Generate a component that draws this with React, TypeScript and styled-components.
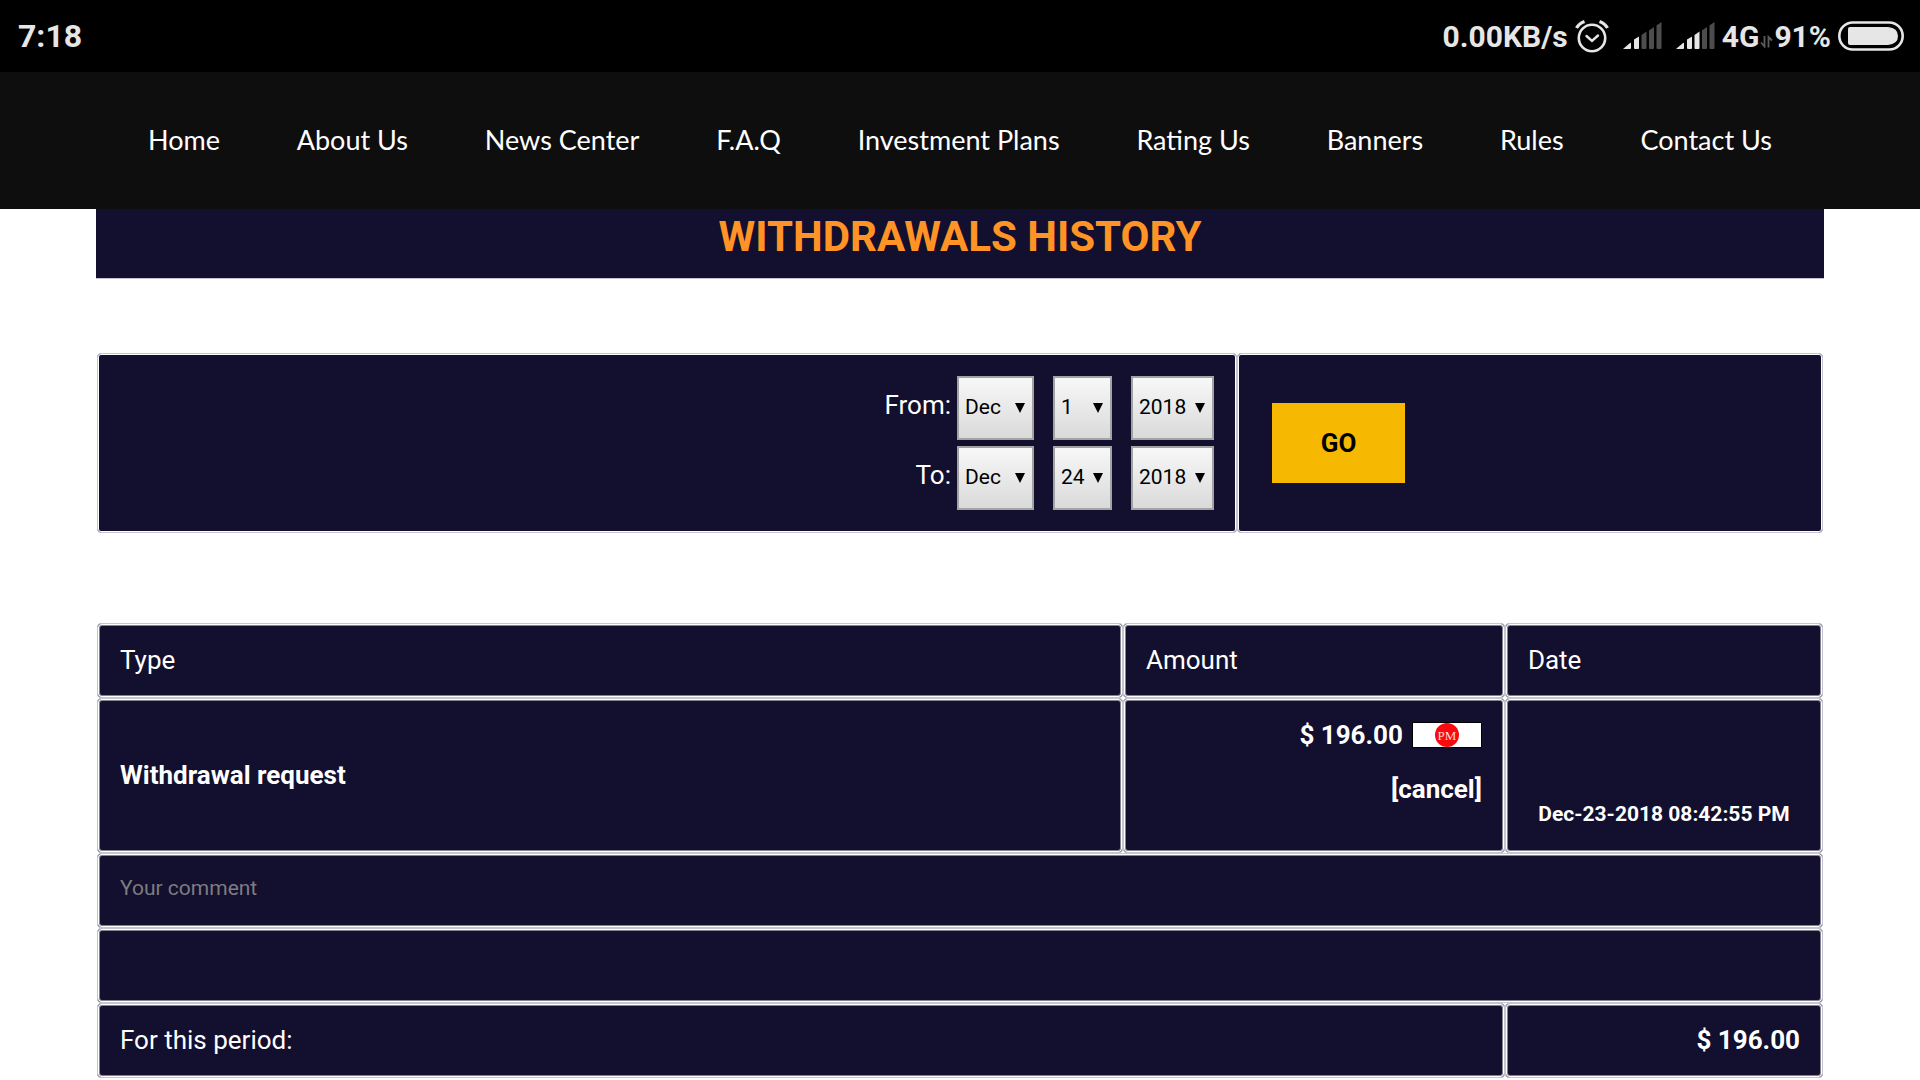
import React from "react";
import styled, { createGlobalStyle, css } from "styled-components";

const ink = "#130f2e";
const rule = "#c6c4d0";

const GlobalStyle = createGlobalStyle`
  *, *::before, *::after { box-sizing: border-box; }
  body {
    margin: 0;
    background: #fff;
    color: #fff;
    font-family: Roboto, "Liberation Sans", sans-serif;
    font-size: 26px;
  }
`;

const StatusBar = styled.header`
  display: flex;
  align-items: center;
  justify-content: space-between;
  height: 72px;
  padding: 0 16px 0 18px;
  background: #000;
  color: #e6e6e6;
  font-weight: 700;
`;

const Clock = styled.time`
  font-size: 32px;
`;

const StatusGroup = styled.div`
  display: flex;
  align-items: center;
  gap: 7px;
  font-size: 30px;

  svg { display: block; }
`;

const Network = styled.span`
  display: flex;
  align-items: center;
  gap: 1px;
`;

const Signals = styled.span`
  display: flex;
  gap: 14px;
  padding-left: 7px;
`;

const Nav = styled.nav`
  display: flex;
  align-items: center;
  justify-content: space-between;
  height: 137px;
  padding: 0 148px 2px;
  background: #0e0e0e;
  font-family: Lato, "Open Sans", sans-serif;
`;

const NavLink = styled.a`
  color: #fff;
  font-size: 27px;
  text-decoration: none;
  white-space: nowrap;
`;

const Main = styled.main`
  width: 90%;
  margin: 0 auto;
`;

const Title = styled.h1`
  margin: 0;
  padding-bottom: 14px;
  border-bottom: 1px solid ${rule};
  background: ${ink};
  color: #ff9326;
  font-size: 42px;
  font-weight: 700;
  line-height: 55px;
  text-align: center;
`;

const Filter = styled.form`
  display: grid;
  grid-template-columns: 1140fr 586fr;
  margin: 74px 1px 90px;
`;

const FilterPanel = styled.div<{ $align: "start" | "end" }>`
  display: flex;
  flex-direction: column;
  justify-content: center;
  align-items: flex-${(p) => p.$align};
  gap: 6px;
  height: 180px;
  padding: ${(p) => (p.$align === "end" ? "0 22px" : "0 34px")};
  border: 1px solid ${rule};
  border-radius: 4px;
  background: ${ink};
  box-shadow: inset 0 0 0 1px #fff;
`;

const DateRow = styled.div`
  display: flex;
  align-items: baseline;
  gap: 19px;
`;

const Labelled = styled.label`
  display: flex;
  align-items: baseline;
  gap: 6px;
`;

const SelectBox = styled.span`
  display: grid;
  align-items: center;

  > * { grid-area: 1 / 1; }

  svg {
    justify-self: end;
    margin-right: 9px;
    pointer-events: none;
  }
`;

const Select = styled.select<{ $width: number }>`
  width: ${(p) => p.$width}px;
  height: 64px;
  padding: 0 0 3px 6px;
  appearance: none;
  border: 2px solid #a3a3a3;
  border-radius: 0;
  background: linear-gradient(#f8f8f8, #dadada);
  color: #000;
  font: 400 21px Roboto, sans-serif;
`;

const GoButton = styled.button`
  width: 133px;
  height: 80px;
  border: 0;
  background: #f6b800;
  color: #000;
  font: 700 26px Roboto, sans-serif;
`;

const History = styled.table`
  width: calc(100% - 2px);
  margin: 0 1px;
  border-collapse: separate;
  border-spacing: 0;
  table-layout: fixed;
  line-height: 55px;
`;

const cell = css<{ $align?: "left" | "right" | "center" }>`
  height: 75px;
  padding: 9px 22px;
  border: 1px solid ${rule};
  border-radius: 4px;
  background: ${ink};
  box-shadow: inset 0 0 0 1px #fff, inset 0 0 0 2px #85828f;
  text-align: ${(p) => p.$align ?? "left"};
`;

const HeadCell = styled.th`
  ${cell}
  font-weight: 400;
`;

const Cell = styled.td`
  ${cell}
`;

const StrongCell = styled(Cell)`
  font-weight: 700;
`;

const AmountCell = styled(StrongCell)`
  padding-bottom: 36px;
  line-height: 54px;
  vertical-align: top;
`;

const DateCell = styled(StrongCell)`
  padding-bottom: 23px;
  font-size: 21px;
  line-height: 30px;
  vertical-align: bottom;
`;

const AmountLine = styled.div`
  display: flex;
  align-items: center;
  justify-content: flex-end;
  gap: 9px;
`;

const Processor = styled.span`
  display: grid;
  place-items: center;
  width: 70px;
  height: 26px;
  border: 1px solid #000;
  background: #fff;
`;

const ProcessorMark = styled.span`
  width: 24px;
  height: 24px;
  border-radius: 50%;
  background: #fa0a0e;
  color: #ffd6d6;
  font: 400 13px/26px "Liberation Serif", serif;
  text-align: center;
`;

const CancelLink = styled.a`
  color: #fff;
  text-decoration: none;
`;

const CommentInput = styled.input`
  display: block;
  width: 100%;
  height: 55px;
  padding: 0 0 6px;
  border: 0;
  outline: 0;
  background: transparent;
  color: #fff;
  font: 400 21px Roboto, sans-serif;

  &::placeholder { color: #7d7c80; opacity: 1; }
`;

const links = [
  "Home",
  "About Us",
  "News Center",
  "F.A.Q",
  "Investment Plans",
  "Rating Us",
  "Banners",
  "Rules",
  "Contact Us",
];

const months = ["Jan", "Feb", "Mar", "Apr", "May", "Jun", "Jul", "Aug", "Sep", "Oct", "Nov", "Dec"];
const days = Array.from({ length: 31 }, (_, i) => String(i + 1));
const years = ["2016", "2017", "2018"];

function AlarmIcon() {
  return (
    <svg width="34" height="34" viewBox="0 0 34 34" fill="none" stroke="#e6e6e6" strokeWidth="2.6" aria-hidden="true">
      <circle cx="17" cy="19" r="13.2" />
      <path d="M11.5 17l5.5 5 6-5.5" strokeWidth="2.4" strokeLinecap="round" />
      <path d="M1.5 9Q4 4.500 9.500 2.500M24.500 2.500Q30 4.500 32.500 9" strokeWidth="3.200" />
    </svg>
  );
}

function SignalIcon({ level }: { level: number }) {
  const bars = [
    "M0 27L7 21Q8 20.500 8 21.500V26Q8 27 7 27Z",
    "M11 17.500L16 14.500V26Q16 27 15 27H12Q11 27 11 26Z",
    "M18.500 13L23.500 9.500V26Q23.500 27 22.500 27H19.500Q18.500 27 18.500 26Z",
    "M26 8.500L31 5V26Q31 27 30 27H27Q26 27 26 26Z",
    "M33.500 3.500L38.500 0V26Q38.500 27 37.500 27H34.500Q33.500 27 33.500 26Z",
  ];
  return (
    <svg width="39" height="28" viewBox="0 0 39 28" aria-hidden="true">
      {bars.map((d, i) => (
        <path key={d} d={d} fill={i < level ? "#e6e6e6" : "#4d4d4d"} />
      ))}
    </svg>
  );
}

function TransferIcon() {
  return (
    <svg width="13" height="24" viewBox="0 0 13 24" fill="none" stroke="#5c5c5c" strokeWidth="1.800" aria-hidden="true">
      <path d="M4.500 12v10.500L1 18.500M8.500 23.500V13L12 16.500" />
    </svg>
  );
}

function BatteryIcon() {
  return (
    <svg width="66" height="30" viewBox="0 0 66 30" aria-hidden="true">
      <rect x="1.300" y="1.500" width="63.400" height="27" rx="13.500" fill="none" stroke="#e6e6e6" strokeWidth="2.600" />
      <path d="M12 6H50Q60 7 60 15T50 24H12Q10 24 10 22V8Q10 6 12 6Z" fill="#e6e6e6" />
    </svg>
  );
}

function Picker({ label, options, value, width }: { label: string; options: string[]; value: string; width: number }) {
  return (
    <SelectBox>
      <Select aria-label={label} defaultValue={value} $width={width}>
        {options.map((o) => (
          <option key={o}>{o}</option>
        ))}
      </Select>
      <svg width="10" height="10" viewBox="0 0 10 10" aria-hidden="true">
        <path d="M0 0H10L5 10Z" fill="#000" />
      </svg>
    </SelectBox>
  );
}

function DateFields({ label, day }: { label: string; day: string }) {
  return (
    <DateRow>
      <Labelled>
        {label}:
        <Picker label={`${label} month`} options={months} value="Dec" width={77} />
      </Labelled>
      <Picker label={`${label} day`} options={days} value={day} width={59} />
      <Picker label={`${label} year`} options={years} value="2018" width={83} />
    </DateRow>
  );
}

export default function App() {
  return (
    <>
      <GlobalStyle />
      <StatusBar>
        <Clock>7:18</Clock>
        <StatusGroup>
          <span>0.00KB/s</span>
          <AlarmIcon />
          <Signals>
            <SignalIcon level={2} />
            <SignalIcon level={3} />
          </Signals>
          <Network>
            <span>4G</span>
            <TransferIcon />
            <span>91%</span>
          </Network>
          <BatteryIcon />
        </StatusGroup>
      </StatusBar>
      <Nav>
        {links.map((text) => (
          <NavLink key={text} href="#">
            {text}
          </NavLink>
        ))}
      </Nav>
      <Main>
        <Title>WITHDRAWALS HISTORY</Title>
        <Filter onSubmit={(e) => e.preventDefault()}>
          <FilterPanel $align="end">
            <DateFields label="From" day="1" />
            <DateFields label="To" day="24" />
          </FilterPanel>
          <FilterPanel $align="start">
            <GoButton type="submit">GO</GoButton>
          </FilterPanel>
        </Filter>
        <History>
          <colgroup>
            <col />
            <col style={{ width: "22.13%" }} />
            <col style={{ width: "18.43%" }} />
          </colgroup>
          <thead>
            <tr>
              <HeadCell>Type</HeadCell>
              <HeadCell>Amount</HeadCell>
              <HeadCell>Date</HeadCell>
            </tr>
          </thead>
          <tbody>
            <tr>
              <StrongCell>Withdrawal request</StrongCell>
              <AmountCell $align="right">
                <AmountLine>
                  $ 196.00
                  <Processor>
                    <ProcessorMark>PM</ProcessorMark>
                  </Processor>
                </AmountLine>
                <CancelLink href="#">[cancel]</CancelLink>
              </AmountCell>
              <DateCell $align="center">Dec-23-2018 08:42:55 PM</DateCell>
            </tr>
            <tr>
              <Cell colSpan={3}>
                <CommentInput type="text" aria-label="Your comment" placeholder="Your comment" />
              </Cell>
            </tr>
            <tr>
              <Cell colSpan={3} />
            </tr>
            <tr>
              <Cell colSpan={2}>For this period:</Cell>
              <StrongCell $align="right">$ 196.00</StrongCell>
            </tr>
          </tbody>
        </History>
      </Main>
    </>
  );
}
